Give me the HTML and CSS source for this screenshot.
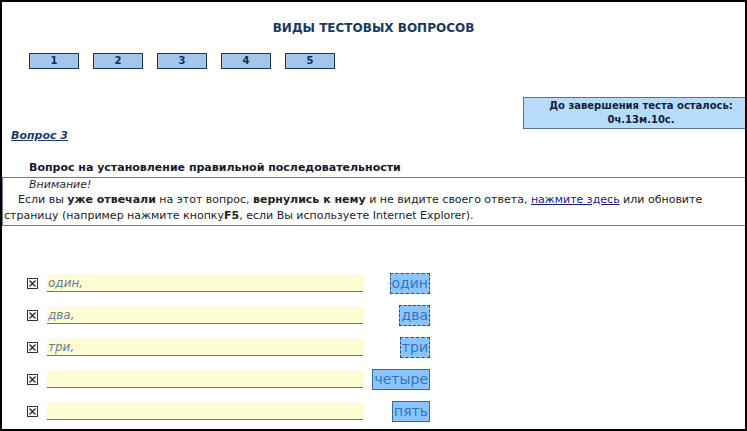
FILE: index.html
```html
<!DOCTYPE html>
<html lang="ru">
<head>
<meta charset="utf-8">
<title>Виды тестовых вопросов</title>
<link rel="stylesheet" href="styles.css">
</head>
<body>
<div class="frame">
  <h1 class="title">ВИДЫ ТЕСТОВЫХ ВОПРОСОВ</h1>
  <div class="nav">
    <span class="nav-btn">1</span>
    <span class="nav-btn">2</span>
    <span class="nav-btn">3</span>
    <span class="nav-btn">4</span>
    <span class="nav-btn">5</span>
  </div>
  <div class="timer-row">
    <div class="timer">До завершения теста осталось:<br>0ч.13м.10с.</div>
  </div>
  <div class="qnum"><a class="qnum-link">Вопрос 3</a></div>
  <div class="qtitle">Вопрос на установление правильной последовательности</div>
  <div class="notice">
    <div class="notice-head">Внимание!</div>
    <p class="notice-text">Если вы <b>уже отвечали</b> на этот вопрос, <b>вернулись к нему</b> и не видите своего ответа, <a class="link">нажмите здесь</a> или обновите<br>страницу (например нажмите кнопку<b>F5</b>, если Вы используете Internet Explorer).</p>
  </div>
  <div class="answers">
    <div class="row">
      <svg class="check" width="11" height="11" viewBox="0 0 11 11"><rect x="0.5" y="0.5" width="10" height="10" fill="#fff" stroke="#333"/><path d="M2.5 2.5 L8.5 8.5 M8.5 2.5 L2.5 8.5" stroke="#222" stroke-width="1.3"/></svg>
      <div class="field">один,</div>
      <div class="label-col"><span class="chip chip-dashed">один</span></div>
    </div>
    <div class="row">
      <svg class="check" width="11" height="11" viewBox="0 0 11 11"><rect x="0.5" y="0.5" width="10" height="10" fill="#fff" stroke="#333"/><path d="M2.5 2.5 L8.5 8.5 M8.5 2.5 L2.5 8.5" stroke="#222" stroke-width="1.3"/></svg>
      <div class="field">два,</div>
      <div class="label-col"><span class="chip chip-dashed">два</span></div>
    </div>
    <div class="row">
      <svg class="check" width="11" height="11" viewBox="0 0 11 11"><rect x="0.5" y="0.5" width="10" height="10" fill="#fff" stroke="#333"/><path d="M2.5 2.5 L8.5 8.5 M8.5 2.5 L2.5 8.5" stroke="#222" stroke-width="1.3"/></svg>
      <div class="field">три,</div>
      <div class="label-col"><span class="chip chip-dashed">три</span></div>
    </div>
    <div class="row">
      <svg class="check" width="11" height="11" viewBox="0 0 11 11"><rect x="0.5" y="0.5" width="10" height="10" fill="#fff" stroke="#333"/><path d="M2.5 2.5 L8.5 8.5 M8.5 2.5 L2.5 8.5" stroke="#222" stroke-width="1.3"/></svg>
      <div class="field"></div>
      <div class="label-col"><span class="chip">четыре</span></div>
    </div>
    <div class="row">
      <svg class="check" width="11" height="11" viewBox="0 0 11 11"><rect x="0.5" y="0.5" width="10" height="10" fill="#fff" stroke="#333"/><path d="M2.5 2.5 L8.5 8.5 M8.5 2.5 L2.5 8.5" stroke="#222" stroke-width="1.3"/></svg>
      <div class="field"></div>
      <div class="label-col"><span class="chip">пять</span></div>
    </div>
  </div>
</div>
</body>
</html>
```

FILE: styles.css
```css
html, body {
  margin: 0;
  padding: 0;
  background: #fff;
}
body {
  font-family: "DejaVu Sans", Verdana, sans-serif;
  font-size: 11px;
  color: #1e1e1e;
}
.frame {
  box-sizing: border-box;
  width: 747px;
  height: 431px;
  border: 2px solid #000;
  overflow: hidden;
  background: #fff;
}
.title {
  margin: 18px 0 0;
  font-size: 12px;
  line-height: 16px;
  font-weight: bold;
  text-align: center;
  color: #163a5e;
}
.nav {
  display: flex;
  gap: 14px;
  margin-top: 17px;
  padding-left: 27px;
}
.nav-btn {
  box-sizing: border-box;
  width: 50px;
  height: 16px;
  border: 1px solid #16365a;
  background: #a3c6ea;
  color: #0f2e58;
  font-size: 10px;
  font-weight: bold;
  line-height: 14px;
  text-align: center;
}
.timer-row {
  display: flex;
  margin-top: 28px;
  padding-left: 521px;
}
.timer {
  flex: 0 0 auto;
  width: 234px;
  border: 1px solid #4f7699;
  background: #b7dcfa;
  color: #10223a;
  font-size: 10px;
  font-weight: bold;
  line-height: 14px;
  padding: 1px 0;
  text-align: center;
}
.qnum {
  padding-left: 9px;
  line-height: 14px;
}
.qnum-link {
  color: #1b3b6c;
  font-weight: bold;
  font-style: italic;
  text-decoration: underline;
}
.qtitle {
  margin-top: 17px;
  padding: 0 0 2px 27px;
  font-size: 11px;
  font-weight: bold;
  line-height: 15px;
  color: #151a2a;
}
.notice {
  border: 1px solid #6d7f96;
  border-right: none;
  padding-bottom: 1px;
}
.notice-head {
  padding-left: 26px;
  font-style: italic;
  line-height: 14px;
  color: #2a2a2a;
}
.notice-text {
  margin: 0;
  padding-left: 1px;
  text-indent: 14px;
  line-height: 16px;
  color: #222;
}
.link {
  color: #1a1a8c;
  text-decoration: underline;
}
.answers {
  display: flex;
  flex-direction: column;
  margin-top: 41px;
  padding-left: 25px;
}
.row {
  display: flex;
  align-items: center;
  height: 32px;
}
.check {
  flex: 0 0 11px;
  display: block;
}
.field {
  box-sizing: border-box;
  width: 316px;
  height: 17px;
  margin-left: 9px;
  padding-left: 1px;
  background: #fefbd3;
  border-bottom: 1px solid #4d7f9c;
  color: #687c9e;
  font-style: italic;
  font-size: 12px;
  line-height: 16px;
}
.label-col {
  display: flex;
  justify-content: flex-end;
  width: 67px;
}
.chip {
  box-sizing: border-box;
  height: 21px;
  padding: 0 1px;
  border: 1px solid #3c6a96;
  background: #8ac6fd;
  color: #3574bd;
  font-size: 14px;
  line-height: 19px;
}
.chip-dashed {
  border-style: dashed;
  border-color: #2d4c6e;
}
```
